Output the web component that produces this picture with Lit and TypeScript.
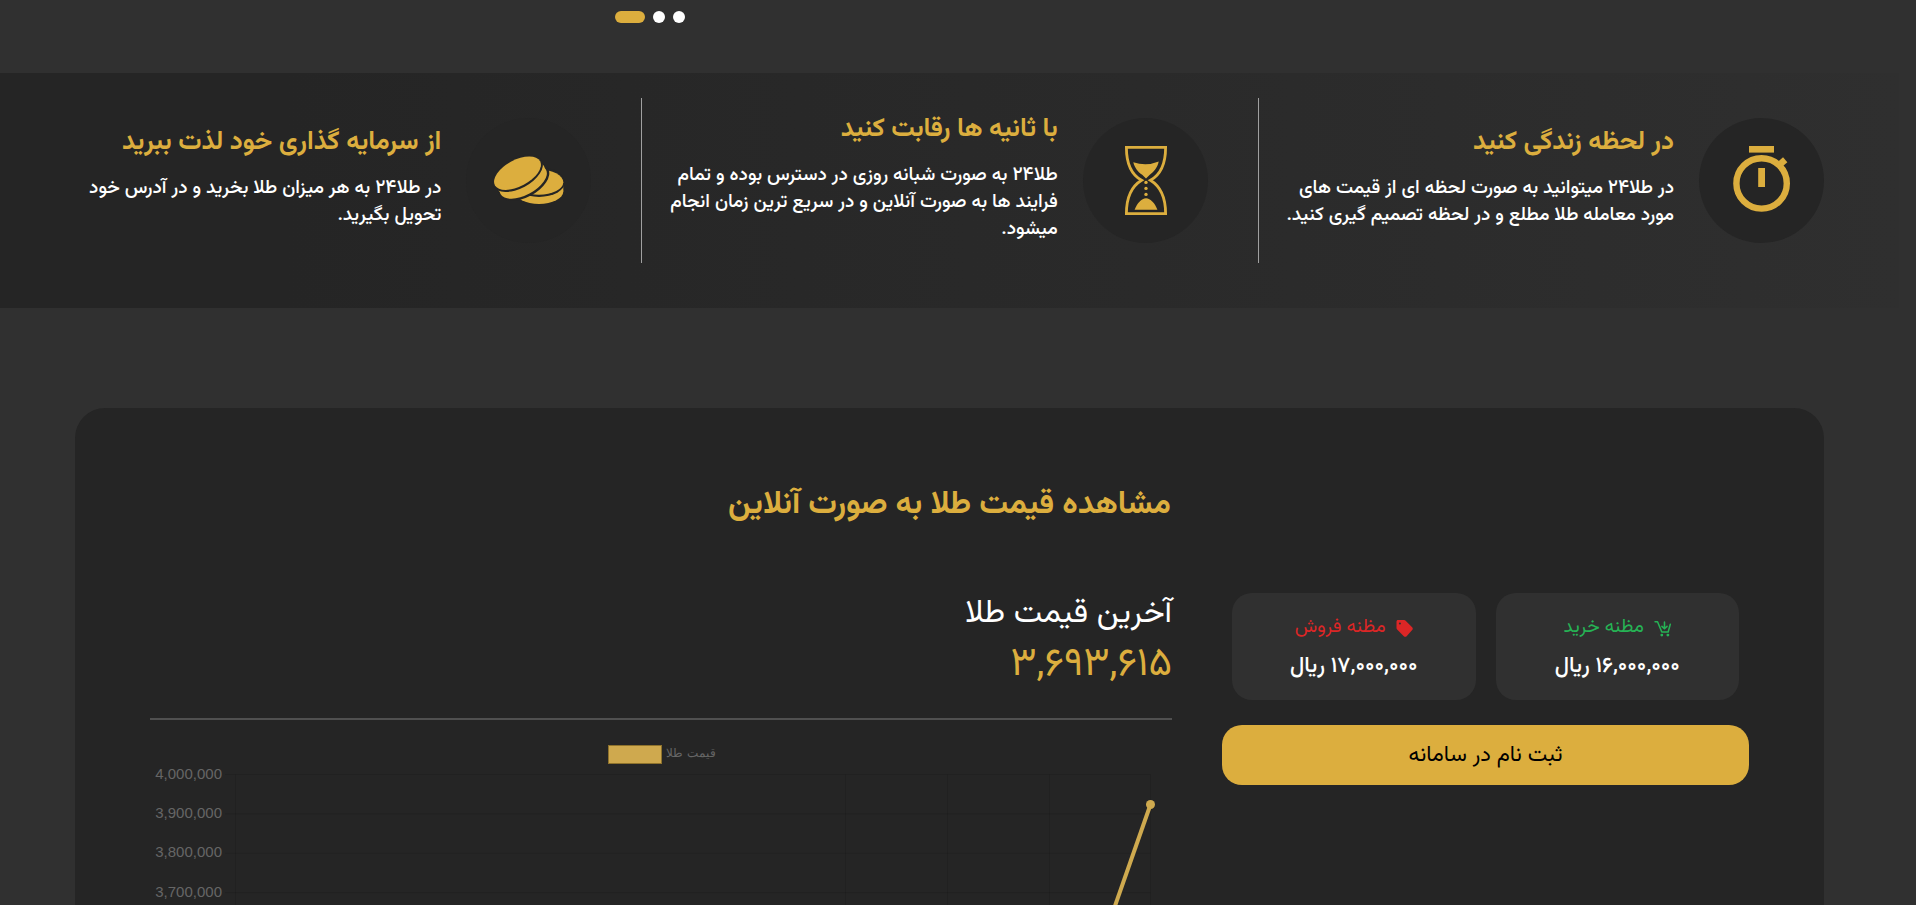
import { LitElement, html, svg, css } from "lit";
import { customElement } from "lit/decorators.js";

const stopwatch = svg`
  <rect x="50" y="28" width="25" height="6.6" />
  <circle cx="62.6" cy="65.4" r="25.2" fill="none" stroke="currentColor" stroke-width="6.4" />
  <rect x="59.2" y="50" width="6.8" height="19" />
  <path d="M79 48L86.2 41.8" stroke="currentColor" stroke-width="6.6" />
`;

const hourglass = svg`
  <path fill="none" stroke="currentColor" stroke-width="2.8"
    d="M43.4 29.4H82.6C82.6 46 77 57 67.4 62.2C77 68 82.6 79 82.6 95.6H43.4C43.4 79 49 68 58.6 62.2C49 57 43.4 46 43.4 29.4Z" />
  <path d="M50.3 44.2Q63 48.8 75.7 43.6C74.5 49.5 71 54 66.8 56.8L63 60.5L59.2 56.8C55 54 51.5 49.5 50.3 44.2Z" />
  <circle cx="63" cy="64.4" r="1.7" /><circle cx="63" cy="70.4" r="1.7" /><circle cx="63" cy="76.4" r="1.7" />
  <path d="M51.6 91.7C54 85.5 58.5 80.3 63 80.3S72 85.5 74.4 91.7Z" />
`;

const coins = svg`
  <ellipse cx="73" cy="73.4" rx="24.3" ry="12.6" />
  <rect x="48.7" y="65" width="48.6" height="8.4" />
  <ellipse class="gap" cx="73" cy="64.2" rx="26" ry="14.8" />
  <ellipse cx="73" cy="64.2" rx="24.3" ry="12.6" />
  <g transform="translate(51.5 55.2) rotate(-28)">
    <ellipse class="gap" cx="1.4" cy="10.6" rx="27.8" ry="15.4" />
    <ellipse cx="1" cy="10.4" rx="25.8" ry="13.2" />
    <ellipse cx="1" cy="6" rx="25.8" ry="13.2" />
    <ellipse class="gap" cx="0" cy="0" rx="27.6" ry="15.3" />
    <ellipse cx="0" cy="0" rx="25.6" ry="13.2" />
  </g>
`;

const features = [
  { icon: stopwatch, title: "در لحظه زندگی کنید", text: "در طلا۲۴ میتوانید به صورت لحظه ای از قیمت های مورد معامله طلا مطلع و در لحظه تصمیم گیری کنید." },
  { icon: hourglass, title: "با ثانیه ها رقابت کنید", text: "طلا۲۴ به صورت شبانه روزی در دسترس بوده و تمام فرایند ها به صورت آنلاین و در سریع ترین زمان انجام میشود." },
  { icon: coins, title: "از سرمایه گذاری خود لذت ببرید", text: "در طلا۲۴ به هر میزان طلا بخرید و در آدرس خود تحویل بگیرید." },
];

@customElement("feature-band")
class FeatureBand extends LitElement {
  static styles = css`
    :host { display: block; }
    .band {
      display: grid;
      grid-template-columns: repeat(3, 1fr);
      padding: 25px 25px 45px;
      background: linear-gradient(to left, #2f2f2f, #2a2a2a 40%, #252525 85%);
    }
    .feature { display: flex; padding-right: 50px; }
    .inner {
      flex: 1;
      display: flex;
      align-items: center;
      gap: 25px;
      min-height: 165px;
      padding-left: 18px;
      border-left: 1px solid #a0a0a0;
    }
    .feature:last-child .inner { border-left-color: transparent; }
    .disc { flex: none; width: 125px; height: 125px; border-radius: 50%; background: #252525; color: #dcae3e; fill: currentColor; }
    .gap { fill: #252525; }
    .copy { flex: 1; padding-bottom: 9px; }
    h3 { margin: 0 0 12px; font-size: 26px; line-height: 40px; font-weight: 700; color: #dcae3e; }
    p { margin: 0; font-size: 19px; line-height: 27px; font-weight: 500; color: #fff; }
  `;
  render() {
    return html`<section class="band">
      ${features.map((f) => html`<article class="feature"><div class="inner">
        <svg class="disc" viewBox="0 0 125 125" aria-hidden="true">${f.icon}</svg>
        <div class="copy"><h3>${f.title}</h3><p>${f.text}</p></div>
      </div></article>`)}
    </section>`;
  }
}

const ticks = ["4,000,000", "3,900,000", "3,800,000", "3,700,000"];
const columns = [85.5, 695.5, 797.5, 899.5, 1000.5];

@customElement("price-chart")
class PriceChart extends LitElement {
  static styles = css`
    :host { display: block; }
    svg { display: block; width: 100%; direction: ltr; font-family: "Liberation Sans", sans-serif; }
    .tick { font-size: 15px; fill: #666; text-anchor: end; }
    .legend { font-size: 12px; fill: #666; text-anchor: middle; }
    .grid { stroke: #000; stroke-opacity: 0.1; }
    .swatch { fill: #cfa94e; stroke: #8e722c; }
    .line { fill: none; stroke: #cfaa4f; stroke-width: 4; }
    .dot { fill: #cfaa4f; }
  `;
  render() {
    return html`<svg viewBox="0 0 1022 511" role="img" aria-label="قیمت طلا">
      <rect class="swatch" x="458.5" y="10.5" width="53" height="18" />
      <text class="legend" x="541" y="22">قیمت طلا</text>
      ${ticks.map((t, i) => svg`
        <path class="grid" d=${`M75 ${39.5 + i * 39.4}H1000.5`} />
        <text class="tick" x="72" y=${43.5 + i * 39.4}>${t}</text>`)}
      ${columns.map((x) => svg`<path class="grid" d=${`M${x} 39.5V443`} />`)}
      <path class="line" d="M1000.5 69.5L899.5 358" />
      <circle class="dot" cx="1000.5" cy="69.5" r="4.5" />
    </svg>`;
  }
}

const cart = svg`<g fill="none" stroke="currentColor" stroke-width="2.2" stroke-linejoin="round" stroke-linecap="round">
  <path d="M1.5 2.5H5L11 17H20L23 6" /><path d="M14.8 3V12M11.2 9L14.8 12.4L18.4 9" /></g>
  <circle cx="11" cy="21.3" r="2" /><circle cx="19.6" cy="21.3" r="2" />`;
const tag = svg`<path fill-rule="evenodd" d="M3 0H11.5C12.3 0 13 .3 13.6 .9L22.8 10.2C24 11.4 24 13 22.8 14.2L15 22.8C13.9 24 12.2 24 11 22.8L1.6 13.5C1 12.9 .7 12.2 .7 11.4V2.3C.7 1 1.7 0 3 0ZM5.5 3.5A1.5 1.5 0 1 0 5.5 6.5A1.5 1.5 0 1 0 5.5 3.5Z" />`;

const quotes = [
  { kind: "buy", icon: cart, label: "مظنه خرید", amount: "۱۶,۰۰۰,۰۰۰" },
  { kind: "sell", icon: tag, label: "مظنه فروش", amount: "۱۷,۰۰۰,۰۰۰" },
];

@customElement("app-root")
class AppRoot extends LitElement {
  static styles = css`
    :host {
      display: block;
      box-sizing: border-box;
      height: 100vh;
      overflow: hidden;
      padding-right: 17px;
      background: #303030;
      color: #fff;
      direction: rtl;
      font-family: Vazirmatn, "DejaVu Sans", sans-serif;
    }
    button { font: inherit; border: 0; cursor: pointer; }
    .pager { display: flex; justify-content: flex-end; gap: 8px; padding: 11px 0 50px 615px; }
    .dot { width: 12px; height: 12px; padding: 0; border-radius: 6px; background: #fff; }
    .dot.active { width: 30px; background: #dcae3e; }
    .panel { margin: 100px 75px 0; padding: 72px 75px; border-radius: 30px; background: #252525; }
    h2 { margin: 0 0 63px; text-align: center; font-size: 32px; line-height: 50px; font-weight: 700; color: #dcae3e; }
    .columns { display: grid; grid-template-columns: 527fr 1022fr; gap: 50px; align-items: start; }
    .quotes { display: grid; grid-template-columns: 1fr 1fr; gap: 20px; padding: 0 10px; margin-bottom: 25px; }
    .quote { display: flex; flex-direction: column; align-items: center; padding: 16px 10px 13px; border-radius: 20px; background: #303030; }
    .label { display: flex; align-items: center; gap: 10px; font-size: 19px; line-height: 38px; }
    .label svg { width: 17px; height: 17px; fill: currentColor; }
    .buy .label { color: #26b355; }
    .sell .label { color: #dc2626; }
    .amount { font-size: 22px; line-height: 40px; font-weight: 500; }
    .signup { width: 100%; height: 60px; border-radius: 20px; background: #dcae3e; color: #000; font-size: 22px; }
    .last { margin: 0; font-size: 32px; line-height: 42px; font-weight: 400; }
    .value { font-size: 40px; line-height: 60px; color: #dcae3e; }
    .summary { padding-bottom: 23px; border-bottom: 2px solid #505050; margin-bottom: 15px; }
  `;
  render() {
    return html`
      <nav class="pager" aria-label="اسلایدها">
        <button class="dot" aria-label="۱"></button>
        <button class="dot" aria-label="۲"></button>
        <button class="dot active" aria-label="۳"></button>
      </nav>
      <feature-band></feature-band>
      <main class="panel">
        <h2>مشاهده قیمت طلا به صورت آنلاین</h2>
        <div class="columns">
          <aside>
            <div class="quotes">
              ${quotes.map((q) => html`<div class="quote ${q.kind}">
                <div class="label"><svg viewBox="0 0 24 24" aria-hidden="true">${q.icon}</svg><span>${q.label}</span></div>
                <div class="amount">${q.amount} ریال</div>
              </div>`)}
            </div>
            <button class="signup">ثبت نام در سامانه</button>
          </aside>
          <section>
            <div class="summary">
              <h3 class="last">آخرین قیمت طلا</h3>
              <div class="value">۳,۶۹۳,۶۱۵</div>
            </div>
            <price-chart></price-chart>
          </section>
        </div>
      </main>
    `;
  }
}
